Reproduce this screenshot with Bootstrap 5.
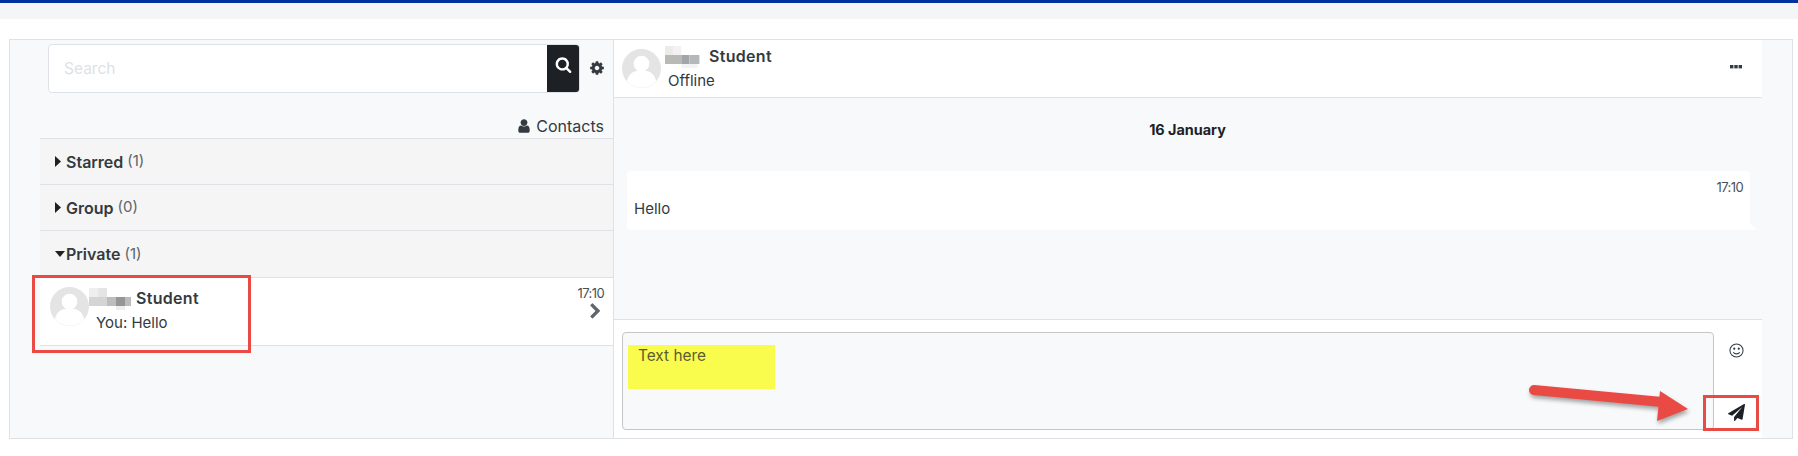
<!DOCTYPE html>
<html lang="en">
<head>
<meta charset="utf-8">
<title>Messages</title>
<link href="https://cdn.jsdelivr.net/npm/bootstrap@5.3.0/dist/css/bootstrap.min.css" rel="stylesheet">
<style>
html,body{height:456px;overflow:hidden}
body{background:#fff;font-family:Inter,"Liberation Sans",sans-serif;font-size:15px;color:#343a40;position:relative}
.topstrip{height:19px;background:#f4f5f7;border-top:3px solid #00319c}
.shell{margin:20px 5px 0 9px;height:400px;border:1px solid #dee2e6;background:#f8f9fa}
.leftpane{width:604px;padding-left:30px;border-right:1px solid #dee2e6;flex:none}
.searchrow{height:49px;margin-top:4px;padding-left:8px}
.searchbox{width:533px;height:49px;border:1px solid #dee2e6;border-radius:4px;background:#fff;overflow:hidden}
.searchtext{padding-left:15px;color:#dee2e6;font-size:15.5px}
.searchbtn{width:32px;background:#1d2125;padding-top:8px}
.gearwrap{width:33px;margin-top:-2px}
.contactsrow{height:46px;padding:20px 9px 0 0;border-bottom:1px solid #dee2e6;line-height:20px;font-size:16px}
.grouprow{height:46px;background:#f5f5f5;border-bottom:1px solid #dee2e6;padding-left:15px;font-size:15.5px}
.grouprow.lastgroup{height:47px}
.grouprow b{font-weight:600;font-size:16px}
.grouprow span.cnt{color:#5d6369;margin-left:4px;font-size:15px}
.caretbox{width:11px}
.personrow{height:68px;background:#fff;border-bottom:1px solid #dee2e6;padding:9px 9px 0 10px}
.facepic{width:39px;height:39px;flex:none}
.nameline{font-weight:600;font-size:16px;letter-spacing:.3px;line-height:22px;height:22px}
.blurname{width:42px;height:22px;margin-right:5px;vertical-align:-6px}
.shortblur{width:38px;margin-right:6px}
.subline{line-height:24px;margin-top:2px;padding-left:7px}
.timelabel{font-size:13px;letter-spacing:-.6px;line-height:16px;color:#495057}
.timecol{margin-top:-2px}
.chevbox{margin-top:-2px}
.rightpane{width:1148px;flex:none}
.convhead{height:58px;background:#fff;border-bottom:1px solid #dee2e6;padding:9px 18px 0 8px}
.headtext{margin-top:-4px}
.headname{padding-left:4px}
.dotsicon{margin-top:9px}
.msgarea{padding:0 8px 0 13px;min-height:0}
.dayline{font-weight:700;font-size:14.4px;color:#1d2125;text-align:center;padding-top:22px;height:73px;line-height:20px;padding-right:6px}
.bubble{height:59px;background:#fff;border-radius:4px 4px 0 4px;padding:8px 7px 0 7px;margin-right:4px;position:relative}
.bubble::after{content:"";position:absolute;right:-7px;bottom:0;border-left:7px solid #fff;border-top:7px solid transparent}
.bubbletime{text-align:right;margin-bottom:3px}
.composebar{height:119px;background:#fff;border-top:1px solid #dee2e6;padding:12px 0 8px 8px;flex:none}
.inputfake{width:1092px;height:98px;border:1px solid #c4c6c8;border-radius:4px;background:#f8f9fa;padding:12px 5px}
.yellowbit{width:147px;height:44px;background:#f9fb4d;padding:1px 10px;color:#5c5c34;line-height:20px;font-size:15.4px}
.composetools{width:45px}
.smileicon{margin-top:11px}
.sendicon{margin-top:46px}
.redframe{position:absolute;border:3px solid #ea4a44}
.redframe.one{left:32px;top:275px;width:219px;height:78px}
.redframe.two{left:1703px;top:395px;width:56px;height:36px}
.redarrow{position:absolute;left:1520px;top:380px;width:180px;height:50px;filter:drop-shadow(1px 3px 2px rgba(0,0,0,.35))}
</style>
</head>
<body>
<div class="topstrip"></div>
<div class="shell d-flex">
  <div class="leftpane">
    <div class="searchrow d-flex align-items-center">
      <div class="searchbox d-flex">
        <div class="searchtext flex-grow-1 d-flex align-items-center">Search</div>
        <div class="searchbtn text-center"><svg width="17" height="17" viewBox="0 0 1792 1792" fill="#fff"><path d="M1216 832q0-185-131.5-316.5t-316.5-131.5-316.5 131.5-131.5 316.5 131.5 316.5 316.5 131.5 316.5-131.5 131.5-316.5zm512 832q0 52-38 90t-90 38q-54 0-90-38l-343-342q-179 124-399 124-143 0-273.5-55.5t-225-150-150-225-55.5-273.5 55.5-273.5 150-225 225-150 273.5-55.5 273.5 55.5 225 150 150 225 55.5 273.5q0 220-124 399l343 343q37 37 37 90z"/></svg></div>
      </div>
      <div class="gearwrap text-center"><svg width="16" height="16" viewBox="0 0 1792 1792" fill="#343a40"><path d="M1152 896q0-106-75-181t-181-75-181 75-75 181 75 181 181 75 181-75 75-181zm512-109v222q0 12-8 23t-20 13l-185 28q-19 54-39 91 35 50 107 138 10 12 10 25t-9 23q-27 37-99 108t-94 71q-12 0-26-9l-138-108q-44 23-91 38-16 136-29 186-7 28-36 28h-222q-14 0-24.5-8.5t-11.5-21.5l-28-184q-49-16-90-37l-141 107q-10 9-25 9-14 0-25-11-126-114-165-168-7-10-7-23 0-12 8-23 15-21 51-66.5t54-70.5q-27-50-41-99l-183-27q-13-2-21-12.5t-8-23.5v-222q0-12 8-23t19-13l186-28q14-46 39-92-40-57-107-138-10-12-10-24 0-10 9-23 26-36 98.5-107.5t94.5-71.5q13 0 26 10l138 107q44-23 91-38 16-136 29-186 7-28 36-28h222q14 0 24.5 8.5t11.5 21.5l28 184q49 16 90 37l142-107q9-9 24-9 13 0 25 10 129 119 165 170 7 8 7 22 0 12-8 23-15 21-51 66.5t-54 70.5q26 50 41 98l183 28q13 2 21 12.5t8 23.5z"/></svg></div>
    </div>
    <div class="contactsrow d-flex justify-content-end align-items-center gap-1">
      <svg width="16" height="16" viewBox="0 0 1792 1792" fill="#343a40"><path d="M1536 1399q0 109-62.5 187t-150.5 78h-854q-88 0-150.5-78t-62.5-187q0-85 8.5-160.5t31.5-152 58.5-131 94-89 134.5-34.5q131 128 313 128t313-128q76 0 134.5 34.5t94 89 58.5 131 31.5 152 8.5 160.5zm-256-887q0 159-112.5 271.5t-271.5 112.5-271.5-112.5-112.5-271.5 112.5-271.5 271.5-112.5 271.5 112.5 112.5 271.5z"/></svg>
      <span>Contacts</span>
    </div>
    <div class="grouprow d-flex align-items-center">
      <span class="caretbox d-flex"><svg width="6" height="11" viewBox="0 0 6 11" fill="#1d2125"><path d="M0 0l6 5.5L0 11z"/></svg></span><b>Starred</b><span class="cnt">(1)</span>
    </div>
    <div class="grouprow d-flex align-items-center">
      <span class="caretbox d-flex"><svg width="6" height="11" viewBox="0 0 6 11" fill="#1d2125"><path d="M0 0l6 5.5L0 11z"/></svg></span><b>Group</b><span class="cnt">(0)</span>
    </div>
    <div class="grouprow lastgroup d-flex align-items-center">
      <span class="caretbox d-flex"><svg width="10" height="6" viewBox="0 0 10 6" fill="#1d2125"><path d="M0 0h10L5 6z"/></svg></span><b>Private</b><span class="cnt">(1)</span>
    </div>
    <div class="personrow d-flex">
      <svg class="facepic" viewBox="0 0 40 40"><circle cx="20" cy="20" r="20" fill="#e4e4e4"/><circle cx="20" cy="15" r="8" fill="#fff"/><path d="M5 33c2-9 8-11 15-11s13 2 15 11a20 20 0 0 1-30 0z" fill="#fff"/></svg>
      <div class="flex-grow-1">
        <div class="nameline"><svg class="blurname" viewBox="0 0 42 22"><rect x="0" y="0" width="9" height="9" fill="#efeeed"/><rect x="9" y="0" width="9" height="9" fill="#e5e5e5"/><rect x="0" y="9" width="18" height="9" fill="#d3d5d7"/><rect x="18" y="9" width="9" height="9" fill="#bdbdbd"/><rect x="27" y="9" width="9" height="9" fill="#969696"/><rect x="36" y="9" width="6" height="9" fill="#bcbcbc"/><rect x="27" y="18" width="9" height="4" fill="#eee"/></svg>Student</div>
        <div class="subline">You: Hello</div>
      </div>
      <div class="text-end timecol">
        <div class="timelabel">17:10</div>
        <svg class="chevbox" width="17" height="17" viewBox="0 0 1792 1792" fill="#5f666d"><path d="M1363 877l-742 742q-19 19-45 19t-45-19l-166-166q-19-19-19-45t19-45l531-531-531-531q-19-19-19-45t19-45l166-166q19-19 45-19t45 19l742 742q19 19 19 45t-19 45z"/></svg>
      </div>
    </div>
  </div>
  <div class="rightpane d-flex flex-column">
    <div class="convhead d-flex">
      <svg class="facepic" viewBox="0 0 40 40"><circle cx="20" cy="20" r="20" fill="#e4e4e4"/><circle cx="20" cy="15" r="8" fill="#fff"/><path d="M5 33c2-9 8-11 15-11s13 2 15 11a20 20 0 0 1-30 0z" fill="#fff"/></svg>
      <div class="flex-grow-1 headtext">
        <div class="nameline headname"><svg class="blurname shortblur" viewBox="0 0 42 22" preserveAspectRatio="none"><rect x="0" y="0" width="9" height="9" fill="#ecebea"/><rect x="9" y="0" width="9" height="9" fill="#f2f2f2"/><rect x="0" y="9" width="18" height="9" fill="#b9b9b6"/><rect x="18" y="9" width="9" height="9" fill="#a3a6a8"/><rect x="27" y="9" width="11" height="9" fill="#b5b7b9"/><rect x="18" y="18" width="18" height="4" fill="#f3f3f3"/></svg>Student</div>
        <div class="subline">Offline</div>
      </div>
      <svg class="dotsicon" width="16" height="16" viewBox="0 0 16 16" fill="#343a40"><rect x="2" y="7" width="3.4" height="3.4"/><rect x="6.3" y="7" width="3.4" height="3.4"/><rect x="10.6" y="7" width="3.4" height="3.4"/></svg>
    </div>
    <div class="msgarea flex-grow-1">
      <div class="dayline">16 January</div>
      <div class="bubble">
        <div class="bubbletime timelabel">17:10</div>
        <div>Hello</div>
      </div>
    </div>
    <div class="composebar d-flex">
      <div class="inputfake"><div class="yellowbit">Text here</div></div>
      <div class="composetools d-flex flex-column align-items-center">
        <svg class="smileicon" width="15" height="15" viewBox="0 0 16 16" fill="none" stroke="#343a40" stroke-width="1.1"><circle cx="8" cy="8" r="7"/><circle cx="5.6" cy="6" r=".6" fill="#343a40"/><circle cx="10.4" cy="6" r=".6" fill="#343a40"/><path d="M4.5 9.8c1.6 2.4 5.4 2.4 7 0"/></svg>
        <svg class="sendicon" width="17" height="17" viewBox="0 0 1792 1792" fill="#1d2125"><path d="M1764 11q33 24 27 64l-256 1536q-5 29-32 45-14 8-31 8-11 0-24-5l-453-185-242 295q-18 23-49 23-13 0-22-4-19-7-30.5-23.5t-11.5-36.5v-349l864-1059-1069 925-395-162q-37-14-40-55-2-40 32-59l1664-960q15-9 32-9 20 0 36 11z"/></svg>
      </div>
    </div>
  </div>
</div>
<div class="redframe one"></div>
<div class="redframe two"></div>
<svg class="redarrow" viewBox="0 0 180 50"><path d="M14 10L142 22" stroke="#ea4a44" stroke-width="10" stroke-linecap="round"/><path d="M140 11L168 29L137 41z" fill="#ea4a44"/></svg>
</body>
</html>
